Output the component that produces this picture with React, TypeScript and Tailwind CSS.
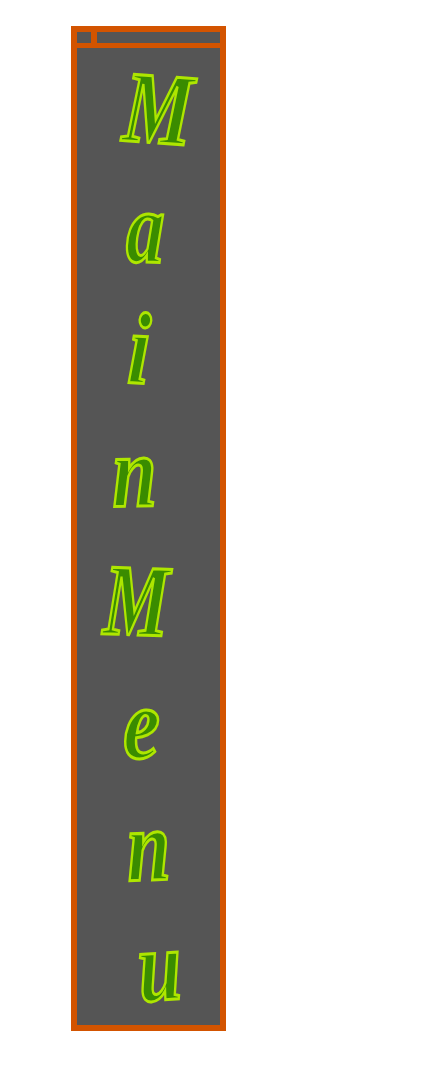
const letters = [
  { ch: 'M', cls: 'ml-[36px] [transform:rotate(4deg)_scaleX(0.76)]' },
  { ch: 'a', cls: 'ml-[43px] mb-[8px] [transform:rotate(2deg)_scaleX(0.74)]' },
  { ch: 'i', cls: 'ml-[48px] mb-[12px] [transform:rotate(3deg)_scaleX(0.76)]' },
  { ch: 'n', cls: 'ml-[29px] mb-[12px] [transform:rotate(-1deg)_scaleX(0.78)]' },
  { ch: 'M', cls: 'ml-[14px] [transform:rotate(2deg)_scaleX(0.72)]' },
  { ch: 'e', cls: 'ml-[42px] [transform:rotate(1deg)_scaleX(0.8)]' },
  { ch: 'n', cls: 'ml-[43px] mb-[2px] [transform:rotate(-2deg)_scaleX(0.76)]' },
  { ch: 'u', cls: 'ml-[54px] mb-[8px] [transform:rotate(-4deg)_scaleX(0.76)]' },
]

export default function App() {
  return (
    <div className="min-h-[1080px] bg-white pt-[26px] pl-[71px]">
      <div className="flex h-[1005px] w-[155px] flex-col border-[6px] border-[#d35400] bg-[#555555]">
        <div className="flex h-[11px] shrink-0">
          <div className="w-[20px] border-r-[6px] border-[#d35400]" />
        </div>
        <div className="h-[5px] shrink-0 bg-[#d35400]" />
        <div className="flex flex-col gap-[13px] pt-[6px]">
          {letters.map((l, i) => (
            <div key={i} className="flex h-[110px] shrink-0 items-center">
              <span
                className={`inline-block font-['Liberation_Serif',serif] text-[102px] leading-none font-bold italic text-[#3a8c00] [-webkit-text-stroke:3px_#aee600] ${l.cls}`}
              >
                {l.ch}
              </span>
            </div>
          ))}
        </div>
      </div>
    </div>
  )
}
